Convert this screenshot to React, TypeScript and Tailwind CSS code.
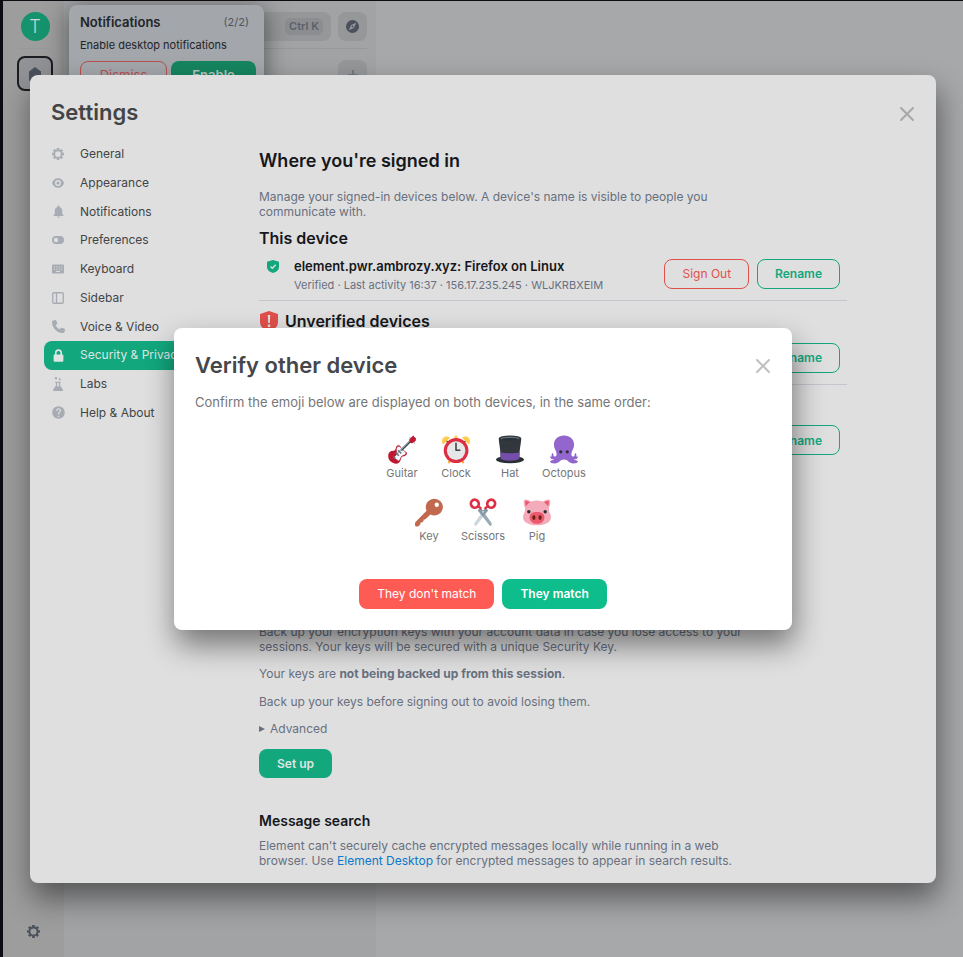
import type { ReactNode } from "react";
import { FaPhone } from "react-icons/fa6";
import { MdHelp, MdNotifications } from "react-icons/md";

function GearIcon({ className }: { className?: string }) {
  return (
    <svg viewBox="0 0 24 24" className={className} fill="none" stroke="currentColor" aria-hidden="true">
      <circle cx="12" cy="12" r="7.500" strokeWidth="3.500" />
      <g strokeWidth="5">
        <path d="M12 0v4M12 20v4M0 12h4M20 12h4M3.500 3.500l2.800 2.800M17.700 17.700l2.800 2.800M3.500 20.500l2.800-2.800M17.700 6.300l2.800-2.800" />
      </g>
    </svg>
  );
}

function EyeIcon({ className }: { className?: string }) {
  return (
    <svg viewBox="0 0 24 24" className={className} fill="currentColor" fillRule="evenodd" aria-hidden="true">
      <path d="M12 2.500c6 0 10 4 12 9.500-2 5.500-6 9.500-12 9.500S2 17.500 0 12C2 6.500 6 2.500 12 2.500zM12 6a6 6 0 1 0 0 12 6 6 0 0 0 0-12zm0 2.800a3.200 3.200 0 1 1 0 6.400 3.200 3.200 0 0 1 0-6.400z" />
    </svg>
  );
}

function ToggleIcon({ className }: { className?: string }) {
  return (
    <svg viewBox="0 0 24 24" className={className} fill="currentColor" fillRule="evenodd" aria-hidden="true">
      <path d="M8 4h8a8 8 0 0 1 0 16H8A8 8 0 0 1 8 4zm0 3.600a4.400 4.400 0 1 0 0 8.800 4.400 4.400 0 0 0 0-8.800z" />
    </svg>
  );
}

function KeyboardIcon({ className }: { className?: string }) {
  return (
    <svg viewBox="0 0 24 24" className={className} fill="currentColor" fillRule="evenodd" aria-hidden="true">
      <path d="M2 3h20a2 2 0 0 1 2 2v14a2 2 0 0 1-2 2H2a2 2 0 0 1-2-2V5a2 2 0 0 1 2-2zm1.500 4v2.200h2.200V7zm5 0v2.200h2.200V7zm5 0v2.200h2.200V7zm5 0v2.200h2.200V7zm-15 4.500v2.200h2.200v-2.200zm5 0v2.200h2.200v-2.200zm5 0v2.200h2.200v-2.200zm5 0v2.200h2.200v-2.200zM8 16v2.200h8V16z" />
    </svg>
  );
}

function SidebarIcon({ className }: { className?: string }) {
  return (
    <svg viewBox="0 0 24 24" className={className} fill="none" stroke="currentColor" strokeWidth="2.600" aria-hidden="true">
      <rect x="1.500" y="1.500" width="21" height="21" rx="2" />
      <path d="M9 2v20" />
    </svg>
  );
}

function LockIcon({ className }: { className?: string }) {
  return (
    <svg viewBox="0 0 24 24" className={className} fill="currentColor" aria-hidden="true">
      <rect x="3" y="10" width="18" height="13.500" rx="2" />
      <path fill="none" stroke="currentColor" strokeWidth="3" d="M7 11V7a5 5 0 0 1 10 0v4" />
    </svg>
  );
}

function FlaskIcon({ className }: { className?: string }) {
  return (
    <svg viewBox="0 0 24 24" className={className} fill="currentColor" aria-hidden="true">
      <circle cx="8.500" cy="2" r="2" />
      <circle cx="15" cy="4" r="1.800" />
      <path d="M7 8h10v2h-1.500v4l5 8c.5 1-.1 2-1.200 2H4.700c-1.100 0-1.700-1-1.200-2l5-8v-4H7zm3.500 2v4.500L9.500 16h5l-1-1.500V10z" />
    </svg>
  );
}

function CloseIcon() {
  return (
    <svg viewBox="0 0 16 16" className="size-4" fill="none" stroke="currentColor" strokeWidth="2" strokeLinecap="round" aria-hidden="true">
      <path d="M2 2l12 12M14 2L2 14" />
    </svg>
  );
}

const tabs: { label: string; icon: ReactNode }[] = [
  { label: "General", icon: <GearIcon className="size-3" /> },
  { label: "Appearance", icon: <EyeIcon className="size-3" /> },
  { label: "Notifications", icon: <MdNotifications className="size-[15px]" /> },
  { label: "Preferences", icon: <ToggleIcon className="size-3" /> },
  { label: "Keyboard", icon: <KeyboardIcon className="size-3" /> },
  { label: "Sidebar", icon: <SidebarIcon className="size-3" /> },
  { label: "Voice & Video", icon: <FaPhone className="size-[13px] -scale-x-100 rotate-90" /> },
  { label: "Security & Privacy", icon: <LockIcon className="size-[13px]" /> },
  { label: "Labs", icon: <FlaskIcon className="size-[14px]" /> },
  { label: "Help & About", icon: <MdHelp className="size-[15px]" /> },
];

function Emoji({ label, children }: { label: string; children: ReactNode }) {
  return (
    <li className="flex w-[54px] flex-col items-center">
      <svg viewBox="0 0 36 36" className="h-[29px] w-7" aria-hidden="true">
        {children}
      </svg>
      <span className="text-[11px] leading-[18px]">{label}</span>
    </li>
  );
}

function Guitar() {
  return (
    <>
      <path fill="#BE1931" d="M1.500 22c2.500-3.500 5.500-1.500 7.500-3.500s.5-4 3-5.500c2-1.200 4 0 4.500 2l5.500 5.500c2.500.5 3 2.500 1.500 4.500s-4.500 1-6 3-.5 4.500-3.500 7-7.500 1-10.500-1.500-4.500-8-2-11.500z" />
      <path fill="#F5F8FA" d="M12 15c1.500-1.500 3-1 4 .5l5.500 5.500c1.500.5 1.500 2 .5 3-2 1.500-4 1-5.500 3.500-1.200 2-1 4-3.500 5-1.500-2-3.500-3-5-4 2.500-3.500 4-3 3.500-6.500-.2-2-1-5.500.5-7z" />
      <path stroke="#292F33" strokeWidth="2.600" d="M17 19L30 6" />
      <path stroke="#99AAB5" strokeWidth="1.400" d="M11 24L29.500 5.700" />
      <path stroke="#66757F" strokeWidth="2" d="M10 22l4 4M13 19l4 4M7 27l2.500 2.500" />
      <path fill="#BE1931" d="M27.500 4.500L32.500 0l1.500 2 2 1.500-.5 3.500-4.500 3c-2 .2-3.500-1.500-3.500-3.500z" />
      <path stroke="#66757F" strokeWidth="1.200" d="M28 2.500l1.500 1.500M33 9l1.500 1" />
    </>
  );
}

function Clock() {
  return (
    <>
      <path fill="#FFCC4D" d="M20 6.042c0 1.112-.903 2.014-2 2.014s-2-.902-2-2.014V2.014C16 .901 16.903 0 18 0s2 .901 2 2.014v4.028z" />
      <path fill="#FFAC33" d="M9.180 36c-.224 0-.452-.052-.666-.159-.736-.374-1.035-1.280-.667-2.027l8.940-18.127c.252-.512.768-.835 1.333-.835s1.081.323 1.333.835l8.941 18.127c.368.747.07 1.653-.666 2.027-.736.372-1.631.07-1.999-.676L18.121 19.740l-7.607 15.425c-.262.529-.788.835-1.334.835z" />
      <path fill="#58595B" d="M18.121 20.392c-.263 0-.516-.106-.702-.295L3.512 5.998c-.388-.394-.388-1.031 0-1.424s1.017-.393 1.404 0L18.121 17.960 31.324 4.573c.389-.393 1.017-.393 1.405 0 .388.394.388 1.031 0 1.424l-13.905 14.100c-.187.188-.439.295-.703.295z" />
      <ellipse cx="18.120" cy="19.385" rx="15.894" ry="16.112" fill="#DD2E44" />
      <ellipse cx="18.120" cy="19.385" rx="11.920" ry="12.085" fill="#E6E7E8" />
      <path fill="#FFCC4D" d="M30.040 1.257c-1.646 0-3.135.676-4.214 1.770l8.429 8.544C35.333 10.478 36 8.968 36 7.299c0-3.336-2.669-6.042-5.960-6.042zm-24.080 0c1.645 0 3.135.676 4.214 1.770l-8.429 8.544C.667 10.478 0 8.968 0 7.299c0-3.336 2.668-6.042 5.960-6.042z" />
      <path fill="#414042" d="M23 20h-5c-.552 0-1-.447-1-1v-9c0-.552.448-1 1-1s1 .448 1 1v8h4c.553 0 1 .448 1 1 0 .553-.447 1-1 1z" />
    </>
  );
}

function Hat() {
  return (
    <>
      <ellipse cx="18" cy="31" rx="18" ry="4.800" fill="#292F33" />
      <path fill="#31373D" d="M3.500 3.500h29C32 12 30 18 30 30c-4 3.500-20 3.500-24 0C6 18 4 12 3.500 3.500z" />
      <path fill="#744EAA" d="M5.500 21.500c6 1.600 19 1.600 25 0L30 30c-4 3.200-20 3.200-24 0z" />
      <ellipse cx="18" cy="3.500" rx="14.500" ry="3.500" fill="#31373D" />
      <ellipse cx="18" cy="3.700" rx="12" ry="2.200" fill="#66757F" />
      <ellipse cx="18" cy="4.600" rx="11" ry="1.500" fill="#292F33" />
    </>
  );
}

function Octopus() {
  return (
    <>
      <path
        fill="#9266CC"
        d="M18 0C10.500 0 5 5 5 12c0 5 3.500 8 3.500 12 0 2-1 3-2.500 3-1.800 0-1.500-2-1.800-4-1.200-.5-2.200.3-2.200 1.800 0 1.200.3 1.700.5 2.200H0c0 2 2 4 5.500 4C4 32 1 32 0 33.500.5 35 2.500 36 6 36c6 0 6.500-5 12-5s6 5 12 5c3.500 0 5.500-1 6-2.500-1-1.500-4-1.500-5.500-2.500 3.500 0 5.500-2 5.500-4h-2.500c.2-.5.500-1 .5-2.200 0-1.500-1-2.300-2.200-1.800-.3 2 0 4-1.800 4-1.500 0-2.500-1-2.500-3 0-4 3.500-7 3.500-12C31 5 25.500 0 18 0z"
      />
      <circle cx="13.800" cy="21" r="2" fill="#292F33" />
      <circle cx="22.200" cy="21" r="2" fill="#292F33" />
    </>
  );
}

function Key() {
  return (
    <path
      fill="#C1694F"
      fillRule="evenodd"
      d="M32.600 3.400C28.300-.9 21.300-.9 17 3.400c-3.400 3.400-4.100 8.400-2.100 12.500L1 29.800c-.7.7-1 1.500-1 2.400V34c0 1.100.9 2 2 2h2l3-3v-2h2l2-2v-2h2l7-6.400c4.100 2 9.200 1.300 12.600-2.100 4.300-4.300 4.300-10.800 0-15.100zM28 5.200a2.800 2.800 0 1 1 0 5.600 2.800 2.800 0 0 1 0-5.600z"
    />
  );
}

function Scissors() {
  return (
    <>
      <path fill="#CCD6DD" d="M21 12l4 3L9 35.500c-2 0-2.500-2-2-4z" />
      <path fill="#99AAB5" d="M15 12l-4 3 16 20.500c2 0 2.500-2 2-4z" />
      <path fill="#8899A6" d="M14 12.500l4 2.500 4-2.500 2.500 3L18 23l-6.500-7.500z" />
      <circle cx="18" cy="17" r="1.300" fill="#CCD6DD" />
      <g fill="none" stroke="#DD2E44" strokeWidth="3.400">
        <ellipse cx="7.500" cy="6.700" rx="5" ry="5.200" transform="rotate(-25 7.500 6.700)" />
        <ellipse cx="28.500" cy="6.700" rx="5" ry="5.200" transform="rotate(25 28.500 6.700)" />
      </g>
      <path stroke="#DD2E44" strokeWidth="3" strokeLinecap="round" d="M12 10l3 2.500M24 10l-3 2.500" />
    </>
  );
}

function Pig() {
  return (
    <>
      <path fill="#F4ABBA" d="M2 1.500C5 1 10 3 12 5.500L4 14C1 10 0 4 2 1.500zM34 1.500C31 1 26 3 24 5.500l8 8.500c3-4 4-10 2-12.500z" />
      <path fill="#EA596E" d="M3 3c3 0 6 1.500 7 3.500L4.500 11C3 8.500 2.500 5 3 3zM33 3c-3 0-6 1.500-7 3.500l5.500 4.500c1.500-2.500 2-6 1.500-8z" />
      <path fill="#F4ABBA" d="M18 2.500C8 2.500 2.500 9 2.500 15.500 2.500 18 0 20 0 24c0 6 7 10.500 18 10.500S36 30 36 24c0-4-2.500-6-2.500-8.500C33.500 9 28 2.500 18 2.500z" />
      <circle cx="7.500" cy="17" r="2.200" fill="#292F33" />
      <circle cx="28.500" cy="17" r="2.200" fill="#292F33" />
      <path fill="#EA596E" d="M18 17.500c-6 0-9.500 2.500-9.500 6.500 0 5 4 8.500 9.500 8.500s9.500-3.500 9.500-8.500c0-4-3.500-6.500-9.500-6.500z" />
      <ellipse cx="14" cy="24.500" rx="2" ry="3" fill="#662113" />
      <ellipse cx="22" cy="24.500" rx="2" ry="3" fill="#662113" />
    </>
  );
}

function OutlineButton({ danger, children }: { danger?: boolean; children: ReactNode }) {
  return (
    <button
      type="button"
      className={
        danger
          ? "h-[30px] rounded-lg border border-[#e0504b] px-[17px] text-[12px] text-[#e0504b]"
          : "h-[30px] rounded-lg border border-[#12a77d] px-[17px] text-[12px] font-semibold text-[#12a77d]"
      }
    >
      {children}
    </button>
  );
}

function Backdrop() {
  return (
    <div className="flex h-full">
      <nav className="flex w-[61px] flex-col items-center justify-between bg-[#9d9d9e] pt-[11px] pb-[19px]" aria-label="Spaces">
        <div className="flex flex-col items-center pl-[3px]">
          <button type="button" className="size-[29px] rounded-full bg-[#15936e] text-[18px] font-light text-[#cdd6d2]">
            T
          </button>
          <div className="mt-[7px] h-px w-8 bg-[#96989d]" />
          <button type="button" aria-label="Home" className="mt-[7px] grid h-[35px] w-9 place-items-center rounded-lg border-2 border-[#1c1d20] bg-[#929396] text-[#4b515c]">
            <svg viewBox="0 0 14 14" className="size-[14px]" fill="currentColor" aria-hidden="true">
              <path d="M7 0l6 4.500V13a1 1 0 0 1-1 1H9v-4H5v4H2a1 1 0 0 1-1-1V4.500z" />
            </svg>
          </button>
        </div>
        <button type="button" aria-label="Quick settings" className="text-[#4d535e]">
          <GearIcon className="size-[13px]" />
        </button>
      </nav>
      <section className="w-[312px] bg-[#a2a3a4] pt-[11px] pr-[9px]">
        <div className="flex justify-end gap-[7px]">
          <button type="button" className="ml-2 flex h-[29px] flex-1 items-center justify-end rounded-lg bg-[#959799] pr-2">
            <kbd className="rounded-md bg-[#8b8d90] px-1 font-['Inter',sans-serif] text-[11px] leading-[17px] font-semibold text-[#5b606a]">Ctrl K</kbd>
          </button>
          <button type="button" aria-label="Explore rooms" className="grid size-[29px] place-items-center rounded-lg bg-[#959799] text-[#4b515c]">
            <svg viewBox="0 0 14 14" className="size-[13px]" fill="currentColor" fillRule="evenodd" aria-hidden="true">
              <path d="M7 0a7 7 0 1 1 0 14A7 7 0 0 1 7 0zm4 3L5.500 5.500 3 11l5.500-2.500zM7 6a1 1 0 1 1 0 2 1 1 0 0 1 0-2z" />
            </svg>
          </button>
        </div>
        <div className="mt-[7px] ml-2 h-px bg-[#96989d]" />
        <div className="mt-[11px] flex justify-end">
          <button type="button" aria-label="Add" className="grid size-[29px] place-items-center rounded-lg bg-[#959799] text-[#6b7079]">
            <svg viewBox="0 0 10 10" className="size-[10px]" stroke="currentColor" strokeWidth="1.500" aria-hidden="true">
              <path d="M5 0v10M0 5h10" />
            </svg>
          </button>
        </div>
      </section>
      <main className="flex-1 bg-[#a7a8aa]" />
    </div>
  );
}

function Toast() {
  return (
    <section className="absolute top-1 left-[66px] w-[195px] rounded-lg bg-[#a3a6ab] px-[11px] pt-2 pb-3 shadow-[0_4px_24px_rgba(0,0,0,0.5)]">
      <div className="flex items-center justify-between">
        <h2 className="text-[13px] leading-[18px] font-semibold text-[#222428]">Notifications</h2>
        <span className="pr-1 text-[11px] leading-4 text-[#50555f]">(2/2)</span>
      </div>
      <p className="mt-[6px] text-[11px] leading-4 text-[#222428]">Enable desktop notifications</p>
      <div className="mt-2 -mr-[3px] flex gap-1">
        <button type="button" className="h-[30px] flex-1 rounded-lg border border-[#b8504f] text-[13px] text-[#b8504f]">Dismiss</button>
        <button type="button" className="h-[30px] flex-1 rounded-lg bg-[#15855f] text-[13px] font-semibold text-[#b6c4bf]">Enable</button>
      </div>
    </section>
  );
}

function Settings() {
  return (
    <section role="dialog" aria-label="Settings" className="h-full overflow-hidden rounded-lg bg-[#dfdfdf] px-[14px] pt-[21px] shadow-[2px_15px_30px_rgba(0,0,0,0.48)]">
      <header className="flex h-8 items-center justify-between px-[7px]">
        <h1 className="text-[22px] leading-8 font-semibold text-[#424446]">Settings</h1>
        <button type="button" aria-label="Close settings" className="pt-1 text-[#a6a7a8]">
          <CloseIcon />
        </button>
      </header>
      <div className="flex pt-3">
        <nav className="grid h-[287px] w-[153px] shrink-0 auto-rows-fr" aria-label="Settings sections">
          {tabs.map((tab) => {
            const active = tab.label === "Security & Privacy";
            return (
              <button
                key={tab.label}
                type="button"
                className={
                  active
                    ? "flex items-center gap-[14px] rounded-lg bg-[#12a77d] pl-[6px] text-[12px] whitespace-nowrap text-[#dfe5e3]"
                    : "flex items-center gap-[14px] rounded-lg pl-[6px] text-[12px] whitespace-nowrap text-[#424446]"
                }
              >
                <span className={active ? "grid w-4 place-items-center" : "grid w-4 place-items-center text-[#a7abb3]"}>{tab.icon}</span>
                {tab.label}
              </button>
            );
          })}
        </nav>
        <div className="mr-[75px] ml-[62px] flex-1 pt-[9px] text-[12px] leading-[15px] text-[#687080]">
          <h2 className="text-[18px] leading-6 font-semibold text-[#15171b]">Where you're signed in</h2>
          <p className="mt-4 max-w-[495px]">
            Manage your signed-in devices below. A device's name is visible to people you communicate with.
          </p>
          <h3 className="mt-[7px] text-[16px] leading-6 font-semibold text-[#15171b]">This device</h3>
          <div className="flex h-[51px] items-center border-b border-[#c3c6cd] pr-[7px] pb-px">
            <svg viewBox="0 0 12 13" className="mb-4 ml-2 h-[13px] w-3" aria-hidden="true">
              <path fill="#12a77d" d="M6 0l6 1.800V7c0 3-2.500 5-6 6-3.500-1-6-3-6-6V1.800z" />
              <path fill="none" stroke="#dfdfdf" strokeWidth="1.300" d="M3.500 6.500l1.800 1.800 3.400-3.600" />
            </svg>
            <div className="ml-[15px] flex-1">
              <p className="text-[13px] leading-5 font-semibold text-[#15171b]">element.pwr.ambrozy.xyz: Firefox on Linux</p>
              <p className="text-[11px] leading-[18px]">Verified · Last activity 16:37 · 156.17.235.245 · WLJKRBXEIM</p>
            </div>
            <div className="flex gap-2 pb-[2px]">
              <OutlineButton danger>Sign Out</OutlineButton>
              <OutlineButton>Rename</OutlineButton>
            </div>
          </div>
          <h3 className="mt-2 flex items-center gap-[6px] text-[16px] leading-6 font-semibold text-[#15171b]">
            <svg viewBox="0 0 20 22" className="h-[22px] w-5" aria-hidden="true">
              <path fill="#e0504b" d="M10 1l9 3v8c0 5-4 8-9 9.500C5 20 1 17 1 12V4z" />
              <path fill="#dfdfdf" d="M8.800 5h2.400l-.4 8H9.200zM8.800 14.500h2.400v2.400H8.800z" />
            </svg>
            Unverified devices
          </h3>
          <div className="flex h-[52px] items-center justify-end border-b border-[#c3c6cd] pr-[7px] pb-[2px]">
            <OutlineButton>Rename</OutlineButton>
          </div>
          <div className="flex h-[110px] items-center justify-end pr-[7px]">
            <OutlineButton>Rename</OutlineButton>
          </div>
          <div className="mt-[129px] max-w-[495px]">
            <p>
              Back up your encryption keys with your account data in case you lose access to your sessions. Your keys will be
              secured with a unique Security Key.
            </p>
            <p className="mt-3">
              Your keys are <b className="font-bold">not being backed up from this session</b>.
            </p>
            <p className="mt-[13px]">Back up your keys before signing out to avoid losing them.</p>
            <button type="button" className="mt-3 flex items-center gap-[5px]">
              <svg viewBox="0 0 6 6" className="size-[6px]" fill="currentColor" aria-hidden="true">
                <path d="M0 0l6 3-6 3z" />
              </svg>
              Advanced
            </button>
            <button type="button" className="mt-[13px] h-[29px] rounded-lg bg-[#12a77d] px-[18px] font-semibold text-[#dfe5e3]">
              Set up
            </button>
            <h3 className="mt-[34px] text-[14px] leading-[18px] font-semibold text-[#15171b]">Message search</h3>
            <p className="mt-2">
              Element can't securely cache encrypted messages locally while running in a web browser. Use{" "}
              <a href="#desktop" className="text-[#0a79c9]">
                Element Desktop
              </a>{" "}
              for encrypted messages to appear in search results.
            </p>
          </div>
        </div>
      </div>
    </section>
  );
}

function VerifyDialog() {
  return (
    <section role="dialog" aria-label="Verify other device" className="w-full max-w-[618px] rounded-lg bg-white px-[21px] py-[21px] text-[#757678] shadow-[2px_15px_30px_rgba(0,0,0,0.48)]">
      <header className="flex h-8 items-center justify-between">
        <h2 className="text-[22px] leading-8 font-semibold text-[#45474a]">Verify other device</h2>
        <button type="button" aria-label="Close dialog" className="pt-[2px] text-[#c1c1c1]">
          <CloseIcon />
        </button>
      </header>
      <p className="mt-3 text-[13px] leading-[18px]">Confirm the emoji below are displayed on both devices, in the same order:</p>
      <ul className="mt-6 flex justify-center">
        <Emoji label="Guitar"><Guitar /></Emoji>
        <Emoji label="Clock"><Clock /></Emoji>
        <Emoji label="Hat"><Hat /></Emoji>
        <Emoji label="Octopus"><Octopus /></Emoji>
      </ul>
      <ul className="mt-4 flex justify-center">
        <Emoji label="Key"><Key /></Emoji>
        <Emoji label="Scissors"><Scissors /></Emoji>
        <Emoji label="Pig"><Pig /></Emoji>
      </ul>
      <div className="mt-[34px] flex justify-center gap-2 text-[12px]">
        <button type="button" className="h-[30px] rounded-lg bg-[#ff5b55] px-[18px] text-white">They don't match</button>
        <button type="button" className="h-[30px] rounded-lg bg-[#0dbd8b] px-[18px] font-semibold text-white">They match</button>
      </div>
    </section>
  );
}

export default function App() {
  return (
    <div className="h-screen overflow-hidden bg-[#0c0c12] pt-px pl-[3px] font-['Inter',sans-serif]">
      <div className="relative h-full">
        <Backdrop />
        <Toast />
        <div className="absolute inset-0 px-[27px] py-[74px]">
          <Settings />
        </div>
        <div className="absolute inset-0 grid place-items-center">
          <VerifyDialog />
        </div>
      </div>
    </div>
  );
}
